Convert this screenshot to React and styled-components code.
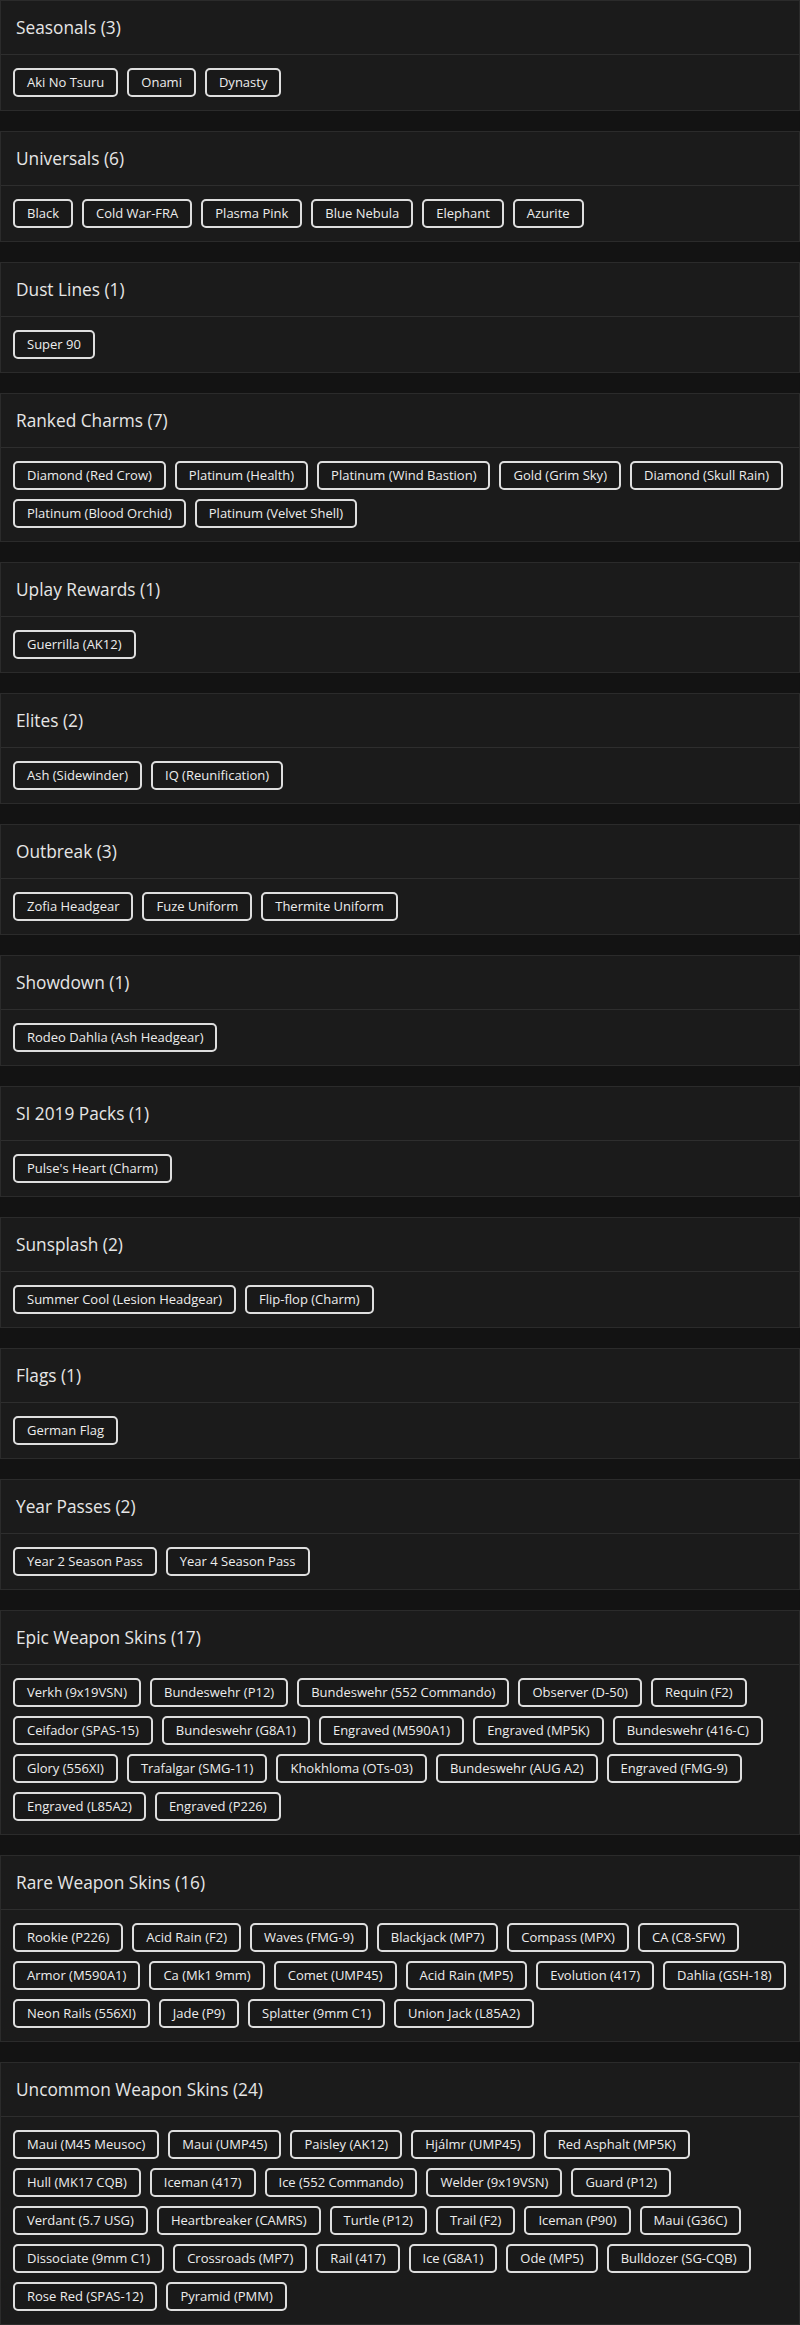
import React from 'react'
import styled, { createGlobalStyle } from 'styled-components'

const GlobalStyle = createGlobalStyle`
    html, body {
        margin: 0;
        padding: 0;
        background: #131313;
    }
    body {
        font-family: "Open Sans", "Liberation Sans", sans-serif;
        color: #e2e2e2;
    }
`

const sections = [
    { title: 'Seasonals', items: ['Aki No Tsuru', 'Onami', 'Dynasty'] },
    { title: 'Universals', items: ['Black', 'Cold War-FRA', 'Plasma Pink', 'Blue Nebula', 'Elephant', 'Azurite'] },
    { title: 'Dust Lines', items: ['Super 90'] },
    {
        title: 'Ranked Charms',
        items: ['Diamond (Red Crow)', 'Platinum (Health)', 'Platinum (Wind Bastion)', 'Gold (Grim Sky)', 'Diamond (Skull Rain)', 'Platinum (Blood Orchid)', 'Platinum (Velvet Shell)']
    },
    { title: 'Uplay Rewards', items: ['Guerrilla (AK12)'] },
    { title: 'Elites', items: ['Ash (Sidewinder)', 'IQ (Reunification)'] },
    { title: 'Outbreak', items: ['Zofia Headgear', 'Fuze Uniform', 'Thermite Uniform'] },
    { title: 'Showdown', items: ['Rodeo Dahlia (Ash Headgear)'] },
    { title: 'SI 2019 Packs', items: ["Pulse's Heart (Charm)"] },
    { title: 'Sunsplash', items: ['Summer Cool (Lesion Headgear)', 'Flip-flop (Charm)'] },
    { title: 'Flags', items: ['German Flag'] },
    { title: 'Year Passes', items: ['Year 2 Season Pass', 'Year 4 Season Pass'] },
    {
        title: 'Epic Weapon Skins',
        items: [
            'Verkh (9x19VSN)', 'Bundeswehr (P12)', 'Bundeswehr (552 Commando)', 'Observer (D-50)', 'Requin (F2)',
            'Ceifador (SPAS-15)', 'Bundeswehr (G8A1)', 'Engraved (M590A1)', 'Engraved (MP5K)', 'Bundeswehr (416-C)',
            'Glory (556XI)', 'Trafalgar (SMG-11)', 'Khokhloma (OTs-03)', 'Bundeswehr (AUG A2)', 'Engraved (FMG-9)',
            'Engraved (L85A2)', 'Engraved (P226)'
        ]
    },
    {
        title: 'Rare Weapon Skins',
        items: [
            'Rookie (P226)', 'Acid Rain (F2)', 'Waves (FMG-9)', 'Blackjack (MP7)', 'Compass (MPX)', 'CA (C8-SFW)',
            'Armor (M590A1)', 'Ca (Mk1 9mm)', 'Comet (UMP45)', 'Acid Rain (MP5)', 'Evolution (417)', 'Dahlia (GSH-18)',
            'Neon Rails (556XI)', 'Jade (P9)', 'Splatter (9mm C1)', 'Union Jack (L85A2)'
        ]
    },
    {
        title: 'Uncommon Weapon Skins',
        items: [
            'Maui (M45 Meusoc)', 'Maui (UMP45)', 'Paisley (AK12)', 'Hjálmr (UMP45)', 'Red Asphalt (MP5K)',
            'Hull (MK17 CQB)', 'Iceman (417)', 'Ice (552 Commando)', 'Welder (9x19VSN)', 'Guard (P12)',
            'Verdant (5.7 USG)', 'Heartbreaker (CAMRS)', 'Turtle (P12)', 'Trail (F2)', 'Iceman (P90)', 'Maui (G36C)',
            'Dissociate (9mm C1)', 'Crossroads (MP7)', 'Rail (417)', 'Ice (G8A1)', 'Ode (MP5)', 'Bulldozer (SG-CQB)',
            'Rose Red (SPAS-12)', 'Pyramid (PMM)'
        ]
    }
]

function Section({ title, items }) {
    return (
        <Card>
            <CardHeader>
                <Title>{title} ({items.length})</Title>
            </CardHeader>
            <CardBody>
                {items.map(item => (
                    <Tag key={item}>{item}</Tag>
                ))}
            </CardBody>
        </Card>
    )
}

export default function App() {
    return (
        <>
            <GlobalStyle />
            <Page>
                {sections.map(s => (
                    <Section key={s.title} title={s.title} items={s.items} />
                ))}
            </Page>
        </>
    )
}

const Page = styled.div`
    display: flex;
    flex-direction: column;
    gap: 20px;
    width: 800px;
`

const Card = styled.section`
    background: #1b1b1b;
    border: 1px solid #2b2b2b;
`

const CardHeader = styled.div`
    height: 53px;
    display: flex;
    align-items: center;
    padding: 0 15px;
    border-bottom: 1px solid #2e2e2e;
`

const Title = styled.h3`
    margin: 0;
    font-size: 17.3px;
    font-weight: 500;
    color: #e6e6e6;
`

const CardBody = styled.div`
    display: flex;
    flex-wrap: wrap;
    gap: 9px;
    padding: 13px 12px;
`

const Tag = styled.span`
    box-sizing: border-box;
    height: 29px;
    line-height: 25px;
    padding: 0 12px;
    border: 2px solid #dedede;
    border-radius: 5px;
    background: #191919;
    font-size: 13px;
    font-weight: 500;
    color: #ededed;
    white-space: nowrap;
`
